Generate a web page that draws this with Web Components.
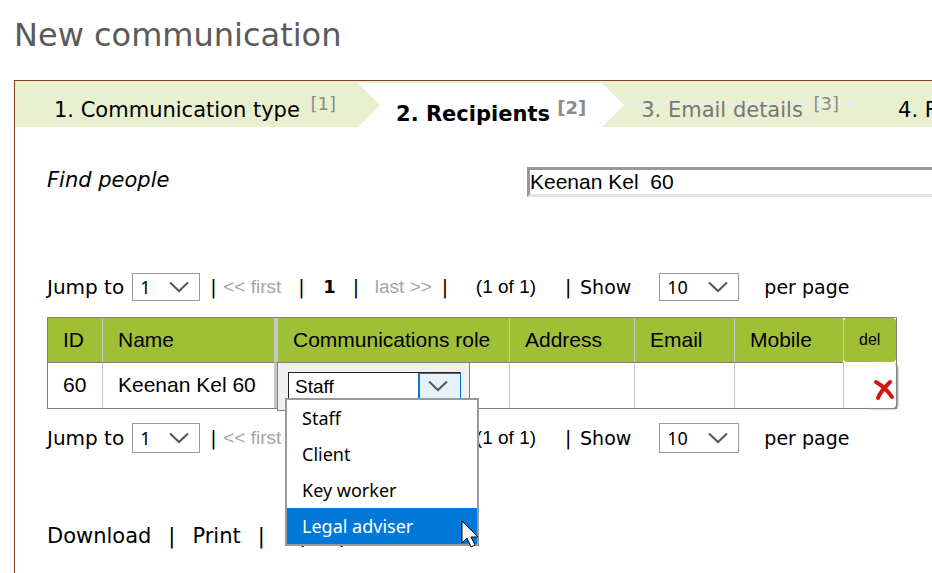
<!DOCTYPE html>
<html lang="en">
<head>
<meta charset="utf-8">
<title>New communication</title>
<style>
html{height:100%;overflow:hidden}
body{margin:0;min-height:100%;overflow:hidden;background:#fff;color:#000;font:21px/26px "DejaVu Sans",sans-serif}
</style>
</head>
<body>
<communication-page></communication-page>
<script>
const define = (name, html, setup) => customElements.define(name, class extends HTMLElement {
  constructor() {
    super();
    const t = document.createElement('template');
    t.innerHTML = html;
    this.attachShadow({mode: 'open'}).append(t.content.cloneNode(true));
  }
  connectedCallback() { if (setup) setup.call(this, this.shadowRoot); }
});

define('drop-down', `
<style>
:host{display:inline-grid;width:68px;height:28px;flex:none}
:host([wide]){width:80px}
:host([tall]){height:30px}
select,svg{grid-area:1/1}
select{appearance:none;width:100%;height:100%;margin:0;padding:0 7px;border:1px solid #999;border-radius:0;background:#fff;color:#000;font:18px "Noto Sans",sans-serif;outline:0}
svg{justify-self:end;align-self:center;margin-right:11px;pointer-events:none}
:host([active]){width:173px;height:28px}
:host([active]) select{border-color:#222 #0078d7 #222 #222;font:19px "Liberation Sans",sans-serif;padding:0 6px;background:linear-gradient(#0078d7,#0078d7) right 40px top/2px 100% no-repeat,linear-gradient(#0078d7,#0078d7) right top/40px 1px no-repeat,linear-gradient(#e5f1fb,#e5f1fb) right/40px 100% no-repeat,#fff}
:host([active]) svg{margin-right:13px}
</style>
<select></select>
<svg width="20" height="12" viewBox="0 0 20 12" fill="none" stroke="#555" stroke-width="2"><path d="M1 1.5 10 10 19 1.5"/></svg>`,
function (r) {
  const s = r.querySelector('select');
  s.setAttribute('aria-label', this.getAttribute('label'));
  s.replaceChildren(...this.getAttribute('options').split(',').map(o => new Option(o)));
});

define('page-navigator', `
<style>
:host{display:flex;align-items:center;height:30px;white-space:pre;font-size:19px}
.a{font-family:"Liberation Sans",sans-serif}
.jump{font-size:20px}
.off{color:#a5a5a5}
b{font-size:18px}
.g1{margin-left:8px}.g2{margin-left:10px}.g3{margin-left:17px}.g4{margin-left:20px}.g5{margin-left:29px}.g6{margin-left:25px}
.bar{width:5px;text-align:center;flex:none}
::slotted([slot=jump]){margin-left:8px}
::slotted([slot=size]){margin-left:28px}
</style>
<span class="jump">Jump to</span><slot name="jump"></slot>
<span class="bar g2">|</span><span class="a off g1">&lt;&lt; first</span><span class="bar g3">|</span><b class="g4">1</b><span class="bar g3">|</span><span class="a off g3">last &gt;&gt;</span><span class="bar g2">|</span><span class="a g5">(1 of 1)</span><span class="bar g5">|</span><span class="g2">Show</span><slot name="size"></slot><span class="g6">per page</span>`);

define('wizard-step', `
<style>
:host{display:flex;flex:none;white-space:nowrap;padding-left:17px}
span{padding:16px 16px 0 0}
sup{font-size:18px;line-height:0;color:#8c8c8c;vertical-align:7px;margin-left:4px}
svg{display:none;margin-top:2px}
:host([first]){padding-left:39px}
:host([first]) span{padding-right:22px}
:host([first]) svg{display:block;background:#fff;color:#e9f0cf}
:host([current]){margin-top:2px;background:#fff;padding-left:16px}
:host([current]) span{padding-top:18px;font-weight:bold}
:host([current]) sup{margin-left:0}
:host([current]) svg{display:block;margin-top:0;background:#e9f0cf;color:#fff}
:host([muted]){color:#777;background:linear-gradient(#ebebf3,#ebebf3) 0 22px/100% 2px no-repeat;margin-right:26px}
</style>
<span><slot></slot> <sup><slot name="n"></slot></sup></span>
<svg width="22" height="44" viewBox="0 0 22 44"><path d="M0 0 22 22 0 44Z" fill="currentColor"/></svg>`);

define('wizard-steps', `
<style>
:host{display:flex;height:46px;background:#e9f0cf}
</style><slot></slot>`);

define('option-menu', `
<style>
:host{display:block;box-sizing:border-box;border:2px solid #999;background:#fff;font:18px/36px "Noto Sans",sans-serif;color:#000}
ul{list-style:none;margin:0;padding:0}
li{padding-left:15px}
li[aria-selected=true]{background:#0078d7;color:#fff}
svg{position:absolute;right:-2px;bottom:-4px}
</style>
<ul role="listbox" aria-label="Communications role"><li role="option">Staff</li><li role="option">Client</li><li role="option">Key worker</li><li role="option" aria-selected="true">Legal adviser</li></ul>
<svg width="18" height="28" viewBox="0 0 18 28"><path d="M1 1V23L6 18 10 27 14 25 10 17H17Z" fill="#fff" stroke="#000" stroke-width="1"/></svg>`);

define('people-table', `
<style>
:host{display:block;position:relative;width:max-content}
table{border-collapse:separate;border-spacing:0;border:1px solid #808080;font:21px "Liberation Sans",sans-serif;text-align:left;white-space:nowrap}
th,td{padding:0 15px;border-left:1px solid #c8c8c8;box-sizing:border-box}
th{height:44px;font-weight:normal;background:#a1bf36}
td{height:46px;padding-bottom:2px;border-top:1px solid #808080}
th:first-child,td:first-child{border-left:0}
th:nth-child(3),td:nth-child(3){border-left:4px solid #c8c8c8}
.id{width:54px}.name{width:172px}.comm{width:235px}.address{width:125px}.email{width:100px}.mobile{width:109px}
th.del{width:53px;font-size:16px;border-radius:4px}
td.role{padding:0;vertical-align:top}
.edit{box-sizing:border-box;width:193px;height:49px;margin:-1px 0 -3px -1px;padding:9px 10px;background:#f0f0f0;border:1px solid #808080;position:relative;display:flex}
td.x{padding:0;border-top:0}
button{display:grid;place-items:center;width:31px;height:45px;margin:0 0 0 auto;padding:9px 0 0 6px;border:0;border-radius:4px;background:#fff;box-shadow:2px 1px 2px #888}
option-menu{position:absolute;left:7px;top:35px;width:194px;z-index:2}
</style>
<table><thead><tr><th class="id">ID</th><th class="name">Name</th><th class="comm">Communications role</th><th class="address">Address</th><th class="email">Email</th><th class="mobile">Mobile</th><th class="del">del</th></tr></thead>
<tbody><tr><td>60</td><td>Keenan Kel 60</td><td class="role"><div class="edit"><drop-down active label="Communications role" options="Staff,Client,Key worker,Legal adviser"></drop-down><option-menu></option-menu></div></td><td></td><td></td><td></td>
<td class="x"><button aria-label="Delete"><svg width="22" height="22" viewBox="0 0 22 22" fill="none" stroke="#d31515" stroke-width="4" stroke-linecap="round"><path d="M3 3C8 6 15 12 19 18M17 3C12 8 7 13 5 19"/></svg></button></td></tr></tbody></table>`);

define('communication-page', `
<style>
:host{display:block;padding-left:14px}
h1{margin:0;padding-top:15px;font-size:32px;line-height:40px;font-weight:normal;color:#5a5a5a}
main{margin-top:25px;margin-right:-20px;border:1px solid #863f25;border-bottom:0}
.body{padding:40px 0 32px 32px}
.find{display:flex;height:29px;align-items:center}
.find label{width:480px;font-style:italic;flex:none;padding-bottom:4px}
input{flex:1;min-width:0;box-sizing:border-box;height:30px;border:3px solid;border-color:#999 #e3e3e3 #e3e3e3 #999;padding:0;font:21px "Liberation Sans",sans-serif;color:#000;outline:0}
.top{margin-top:76px}
people-table{margin:15px 0 14px}
nav{display:flex;margin-top:70px;white-space:pre}
a{color:#000;text-decoration:none}
nav span{width:41px;text-align:center}
nav a:last-child{margin-left:18px}
</style>
<h1>New communication</h1>
<main>
<wizard-steps>
<wizard-step first>1. Communication type<span slot="n">[1]</span></wizard-step>
<wizard-step current>2. Recipients<span slot="n">[2]</span></wizard-step>
<wizard-step muted>3. Email details<span slot="n">[3]</span></wizard-step>
<wizard-step>4. Finish</wizard-step>
</wizard-steps>
<div class="body">
<div class="find"><label for="find">Find people</label><input id="find" value="Keenan Kel  60"></div>
<page-navigator class="top"><drop-down slot="jump" label="Jump to" options="1"></drop-down><drop-down slot="size" wide label="Show per page" options="10"></drop-down></page-navigator>
<people-table></people-table>
<page-navigator><drop-down slot="jump" tall label="Jump to" options="1"></drop-down><drop-down slot="size" wide tall label="Show per page" options="10"></drop-down></page-navigator>
<nav><a href="#">Download</a><span>|</span><a href="#">Print</a><span>|</span><a href="#">people</a></nav>
</div>
</main>`);
</script>
</body>
</html>
